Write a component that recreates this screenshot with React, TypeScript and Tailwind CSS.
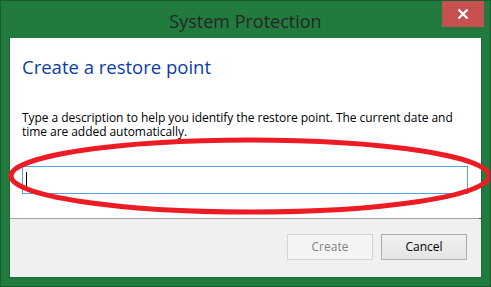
import React from "react";

// Boîte de dialogue "System Protection" (Windows 8), avec l'ellipse rouge dessinée par-dessus
export default function App() {
    const font = { fontFamily: '"Open Sans", "Noto Sans", sans-serif' };

    return (
        <div
            className="relative w-[491px] h-[287px] bg-[#217a3e] border border-[#1b5c31] flex flex-col overflow-hidden"
            style={font}
        >
            {/* Barre de titre */}
            <div className="relative h-[37px] flex items-center justify-center">
                <span className="text-[18px] text-[#262626] leading-none pt-[3px]">System Protection</span>
                <button className="absolute right-[6px] top-0 w-[42px] h-[26px] bg-[#c75050] flex items-center justify-center">
                    <svg width="12" height="12" viewBox="0 0 12 12">
                        <path d="M1.5 1.5 L10.5 10.5 M10.5 1.5 L1.5 10.5" stroke="#fff" strokeWidth="2.4" />
                    </svg>
                </button>
            </div>

            {/* Zone cliente */}
            <div className="ml-[8px] w-[473px] h-[240px] flex flex-col border border-[#1d6a36] border-t-0">
                <div className="bg-white h-[180px] flex flex-col pl-[12px] pr-[13px]">
                    <h1 className="text-[18.5px] text-[#0b3ba6] leading-none mt-[20px]">Create a restore point</h1>
                    <p className="text-[12px] text-[#000] leading-[14px] mt-[34px] tracking-[-0.05px]">
                        Type a description to help you identify the restore point. The current date and time are added automatically.
                    </p>
                    <div className="mt-[27px] h-[28px] border border-[#569de5] flex items-center pl-[3px]">
                        <span className="w-px h-[16px] bg-black" />
                    </div>
                </div>
                <div className="h-px bg-[#a0a0a0] mr-[2px]" />
                <div className="flex-1 bg-[#f0f0f0] flex justify-end items-start gap-[8px] pt-[15px] pr-[14px]">
                    <button className="w-[86px] h-[26px] border border-[#d5d5d5] bg-[#f4f4f4] text-[12px] text-[#838383]">
                        Create
                    </button>
                    <button className="w-[86px] h-[26px] border border-[#adadad] bg-gradient-to-b from-[#f0f0f0] to-[#e5e5e5] text-[12px] text-black">
                        Cancel
                    </button>
                </div>
            </div>

            {/* Ellipse rouge de mise en évidence */}
            <svg className="absolute left-0 top-0 pointer-events-none" width="491" height="287">
                <ellipse cx="249" cy="175" rx="239" ry="36" fill="none" stroke="#ed1c24" strokeWidth="5" />
            </svg>
        </div>
    );
}
